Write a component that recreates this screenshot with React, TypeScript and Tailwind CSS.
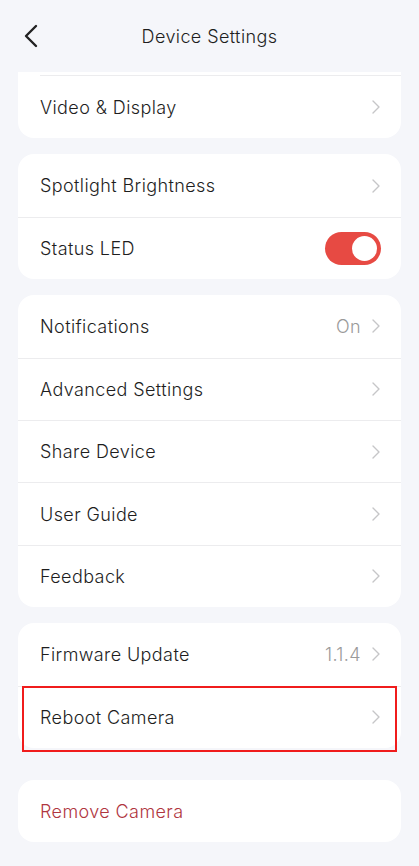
import React from "react";

const font = { fontFamily: "Inter, 'Noto Sans', sans-serif" };

const Chevron = () => (
  <svg width="10" height="16" viewBox="0 0 10 16" fill="none" className="shrink-0">
    <path d="M2 2l6 6-6 6" stroke="#c6c6c8" strokeWidth="1.4" strokeLinecap="round" strokeLinejoin="round" />
  </svg>
);

interface RowProps {
  label: string;
  value?: string;
  first?: boolean;
  danger?: boolean;
  noArrow?: boolean;
  children?: React.ReactNode;
}

const Row: React.FC<RowProps> = ({ label, value, first, danger, noArrow, children }) => (
  <div className={`flex items-center h-[62.4px] pl-[22px] pr-[20px] ${first ? "" : "border-t border-[#ececee]"}`}>
    <span className={`flex-1 text-[18px] font-light tracking-[0.4px] ${danger ? "text-[#b0363f]" : "text-[#1e1e1e]"}`}>
      {label}
    </span>
    {value && <span className="text-[18px] font-light tracking-[0.4px] text-[#9a9a9a] mr-[10px]">{value}</span>}
    {children}
    {!noArrow && !children && <Chevron />}
  </div>
);

const Toggle = () => (
  <div className="w-[56px] h-[33px] rounded-full bg-[#e74a43] flex items-center justify-end pr-[4px]">
    <div className="w-[25px] h-[25px] rounded-full bg-white" />
  </div>
);

export default function App() {
  return (
    <div className="min-h-[866px] bg-[#f5f6fa] flex flex-col" style={font}>
      <div className="h-[72px] flex items-center relative">
        <svg width="16" height="24" viewBox="0 0 16 24" fill="none" className="ml-[23px]">
          <path d="M13 2L3 12l10 10" stroke="#222" strokeWidth="2.4" strokeLinecap="round" strokeLinejoin="round" />
        </svg>
        <div className="absolute inset-0 flex items-center justify-center text-[18px] font-light tracking-[0.4px] text-[#1e1e1e]">
          Device Settings
        </div>
      </div>

      <div className="mx-[18px] flex flex-col">
        <div className="bg-white rounded-b-2xl pt-[3px]">
          <div className="border-t border-[#ececee] ml-[22px]" />
          <Row label="Video & Display" first />
        </div>

        <div className="bg-white rounded-2xl mt-[16px]">
          <Row label="Spotlight Brightness" first />
          <Row label="Status LED">
            <Toggle />
          </Row>
        </div>

        <div className="bg-white rounded-2xl mt-[16px]">
          <Row label="Notifications" value="On" first />
          <Row label="Advanced Settings" />
          <Row label="Share Device" />
          <Row label="User Guide" />
          <Row label="Feedback" />
        </div>

        <div className="bg-white rounded-2xl mt-[16px]">
          <Row label="Firmware Update" value="1.1.4" first />
          <div className="relative">
            <Row label="Reboot Camera" />
            <div className="absolute left-[4px] right-[4px] top-0 bottom-[-4px] border-2 border-[#f01c1c]" />
          </div>
        </div>

        <div className="bg-white rounded-2xl mt-[32px]">
          <Row label="Remove Camera" first danger noArrow />
        </div>
      </div>
    </div>
  );
}
